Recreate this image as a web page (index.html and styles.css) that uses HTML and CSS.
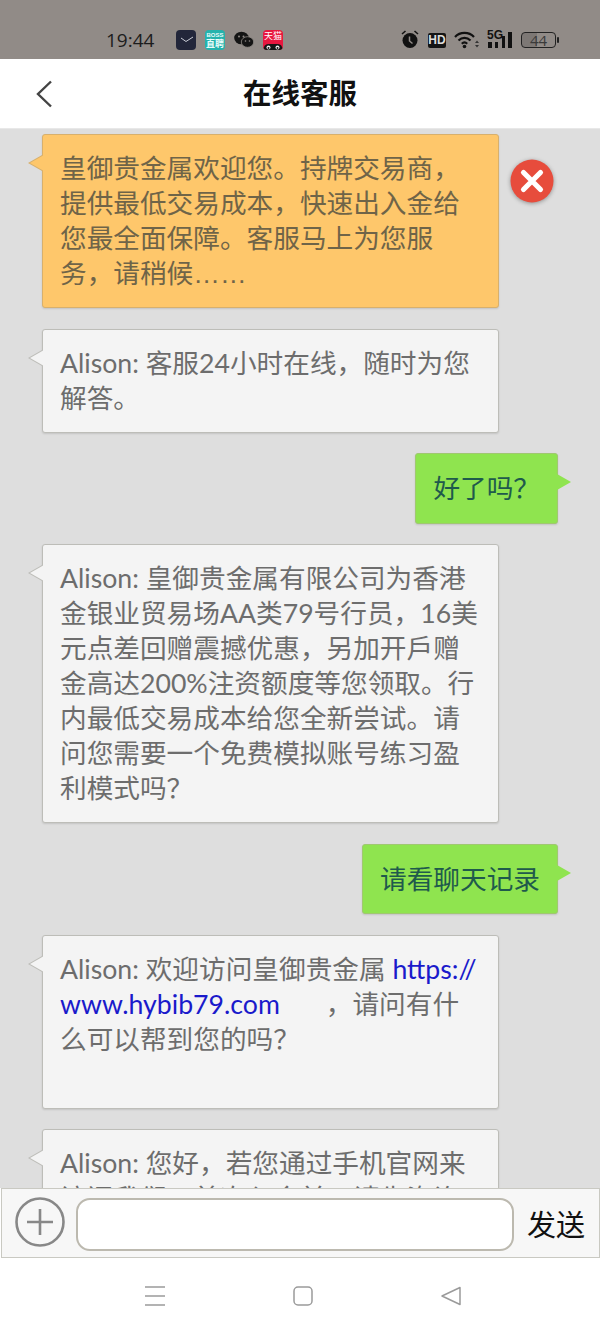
FILE: index.html
```html
<!DOCTYPE html>
<html lang="zh">
<head>
<meta charset="utf-8">
<title>在线客服</title>
<link rel="stylesheet" href="styles.css">
</head>
<body>
<div class="status">
  <span class="time">19:44</span>
  <div class="apps">
    <svg class="app" viewBox="0 0 20 20"><rect width="20" height="20" rx="4" fill="#22263a"/><path d="M5 8 10 11.500 17 7" fill="none" stroke="#c9ccd6" stroke-width="1"/></svg>
    <div class="app boss"><span class="boss-a">BOSS</span><span class="boss-b">直聘</span></div>
    <svg class="app" viewBox="0 0 20 20"><ellipse cx="7.500" cy="8" rx="7.300" ry="6.300" fill="#141414"/><ellipse cx="13.500" cy="12" rx="6.200" ry="5.300" fill="#141414" stroke="#918b87" stroke-width=".8"/><circle cx="5" cy="6.500" r="1" fill="#918b87"/><circle cx="9.500" cy="6.500" r="1" fill="#918b87"/><circle cx="11.500" cy="11" r=".8" fill="#918b87"/><circle cx="15.500" cy="11" r=".8" fill="#918b87"/></svg>
    <div class="app tmall"><span class="tmall-t">天猫</span><svg class="tmall-eyes" viewBox="0 0 20 8"><path d="M0 8Q1 2 5 2H15Q19 2 20 8Z" fill="#151515"/><circle cx="5.500" cy="5.500" r="2" fill="#eee"/><circle cx="14.500" cy="5.500" r="2" fill="#eee"/><circle cx="5.500" cy="6" r="1" fill="#151515"/><circle cx="14.500" cy="6" r="1" fill="#151515"/></svg></div>
  </div>
  <div class="sys">
    <svg class="alarm" viewBox="0 0 18 18"><circle cx="9" cy="10.500" r="7.500" fill="#111"/><path d="M1 4 4.500 1M17 4 13.500 1" stroke="#111" stroke-width="1.600"/><path d="M8.500 6.500v4.500l3 2.500" fill="none" stroke="#918b87" stroke-width="1.500"/></svg>
    <span class="hd">HD</span>
    <svg class="wifi" viewBox="0 0 25 20"><path d="M1 7C6 1.500 15 1.500 20 7M4.500 10.500C8 7 13 7 16.500 10.500M7.800 13.800C9.500 12.100 11.500 12.100 13.200 13.800" fill="none" stroke="#111" stroke-width="2.200"/><circle cx="10.500" cy="16.500" r="1.800" fill="#111"/><path d="M21 13 23 10.500 25 13ZM21 15 23 17.500 25 15Z" fill="#333"/></svg>
    <div class="signal">
      <span class="five">5G</span>
      <svg class="bars" viewBox="0 0 26 20"><path d="M1 12h4v6H1zM8 12h3v6H8zM15 6h3v12h-3zM21 2h4v16h-4z" fill="#111"/></svg>
    </div>
    <div class="battery"><span class="level">44</span></div>
  </div>
</div>
<header class="top">
  <svg class="back" viewBox="0 0 16 28"><path d="M15 1.500 2 14l13 12.500" fill="none" stroke="#444" stroke-width="2.400"/></svg>
  <h1 class="title">在线客服</h1>
</header>
<main class="chat">
  <div class="bubble notice">皇御贵金属欢迎您。持牌交易商，提供最低交易成本，快速出入金给您最全面保障。客服马上为您服务，请稍候<span class="dots">……</span></div>
  <div class="bubble agent">Alison: 客服24小时在线，随时为您解答。</div>
  <div class="bubble mine">好了吗？</div>
  <div class="bubble agent">Alison: 皇御贵金属有限公司为香港金银业贸易场AA类79号行员，16美元点差回赠震撼优惠，另加开戶赠金高达200%注资额度等您领取。行内最低交易成本给您全新尝试。请问您需要一个免费模拟账号练习盈利模式吗？</div>
  <div class="bubble mine">请看聊天记录</div>
  <div class="bubble agent">Alison: 欢迎访问皇御贵金属 <a class="link">https://<wbr>www.hybib79.com</a>，请问有什么可以帮到您的吗？<br><br></div>
  <div class="bubble agent">Alison: 您好，若您通过手机官网来访问我们，首次入金前，请先咨询客服</div>
  <svg class="close" viewBox="0 0 44 44"><circle cx="22" cy="22" r="21.500" fill="#e74c3c"/><path d="M13.500 13.500 30.500 30.500M30.500 13.500 13.500 30.500" stroke="#fff" stroke-width="5.200" stroke-linecap="round"/></svg>
</main>
<footer class="composer">
  <svg class="plus" viewBox="0 0 50 50"><circle cx="25" cy="25" r="23.500" fill="none" stroke="#888" stroke-width="2.600"/><path d="M25 12v26M12 25h26" stroke="#888" stroke-width="2.600"/></svg>
  <div class="input"></div>
  <span class="send">发送</span>
</footer>
<nav class="nav">
  <svg class="nav-icon" viewBox="0 0 20 20"><path d="M0 1h20M0 10h20M0 19h20" stroke="#9a9a9a" stroke-width="1.400"/></svg>
  <svg class="nav-icon" viewBox="0 0 20 20"><rect x="1" y="1" width="18" height="18" rx="4" fill="none" stroke="#9a9a9a" stroke-width="1.500"/></svg>
  <svg class="nav-icon" viewBox="0 0 20 20"><path d="M1 10 19 1.500V18.500Z" fill="none" stroke="#9a9a9a" stroke-width="1.500" stroke-linejoin="round"/></svg>
</nav>
</body>
</html>
```
FILE: styles.css
```css
* { box-sizing: border-box; }
html, body { margin: 0; height: 100%; }
body {
  width: 600px;
  height: 1333px;
  overflow: hidden;
  display: flex;
  flex-direction: column;
  background: #fff;
  font-family: Lato, "Noto Sans CJK SC", sans-serif;
}

/* status bar */
.status {
  flex: 0 0 59px;
  background: #918b87;
  display: flex;
  align-items: center;
  padding: 21px 44px 0 106px;
  color: #1a1a1a;
}
.time { font: 19px/20px "Open Sans", sans-serif; width: 70px; color: #1c1c1c; }
.apps { display: flex; gap: 9px; }
.app { display: block; width: 20px; height: 20px; }
.boss {
  background: #25b3ad;
  border-radius: 4px;
  color: #eafcfb;
  display: flex;
  flex-direction: column;
  align-items: center;
  justify-content: center;
  overflow: hidden;
}
.boss-a { font: 700 6px/7px "Liberation Sans", sans-serif; }
.boss-b { font: 700 9px/10px "Noto Sans CJK SC", sans-serif; }
.tmall {
  position: relative;
  background: #e8173f;
  border-radius: 4px;
  color: #fff;
  text-align: center;
  overflow: hidden;
}
.tmall-t { display: block; font: 9px/12px "Noto Sans CJK SC", sans-serif; }
.tmall-eyes { position: absolute; left: 0; bottom: 0; width: 20px; height: 8px; }
.sys { display: flex; align-items: center; margin-left: auto; }
.alarm { align-self: flex-start; width: 18px; height: 18px; }
.hd {
  margin-left: 9px;
  width: 18px;
  height: 15px;
  background: #151515;
  border-radius: 2px;
  color: #ddd;
  text-align: center;
  font: 700 12px/15px "Liberation Sans Narrow", "Liberation Sans", sans-serif;
}
.wifi { margin-left: 8px; width: 25px; height: 20px; }
.signal { position: relative; margin-left: 8px; width: 26px; height: 20px; }
.five { position: absolute; left: 0; top: 0; font: 700 12px/10px "Liberation Sans Narrow", "Liberation Sans", sans-serif; color: #111; }
.bars { display: block; width: 26px; height: 20px; }
.battery {
  position: relative;
  margin-left: 8px;
  width: 35px;
  height: 16px;
  border: 1.300px solid #222;
  border-radius: 4px;
  background: linear-gradient(90deg, #7d7875 44%, transparent 44%);
  text-align: center;
  font: 15px/14px "Open Sans", sans-serif;
  color: #3a3a3a;
}
.battery::after {
  content: "";
  position: absolute;
  right: -4px;
  top: 4px;
  width: 2px;
  height: 6px;
  background: #222;
  border-radius: 1px;
}

/* header */
.top {
  flex: 0 0 70px;
  background: #fff;
  display: flex;
  align-items: center;
  justify-content: center;
  position: relative;
  border-bottom: 1px solid #e8e8e8;
  padding-bottom: 3px;
}
.back { position: absolute; left: 36px; top: 21px; width: 16px; height: 28px; }
.title { margin: 0; font: 700 28.500px/40px "Noto Sans CJK SC", sans-serif; color: #111; }

/* chat */
.chat {
  flex: 1;
  min-height: 0;
  overflow: hidden;
  position: relative;
  background: #dedede;
  display: flex;
  flex-direction: column;
  align-items: flex-start;
  gap: 20.500px;
  padding: 5px 42px 0;
}
.bubble {
  position: relative;
  flex: none;
  border: 1px solid #bdbdb8;
  border-radius: 3px;
  padding: 16px 17px;
  font-size: 26.670px;
  line-height: 35px;
  box-shadow: 0 1px 2px rgba(0,0,0,.12);
}
.bubble::before, .bubble::after {
  content: "";
  position: absolute;
  top: 20px;
  width: 0;
  height: 0;
  border: 8px solid transparent;
}
.agent, .notice { width: 457px; }
.agent::before, .notice::before { left: -15px; border-left-width: 0; border-right-width: 14px; border-right-color: #bdbdb8; }
.agent::after, .notice::after { left: -13.500px; border-left-width: 0; border-right-width: 14px; }
.agent { background: #f4f4f4; color: #6d6d6d; }
.agent::after { border-right-color: #f4f4f4; }
.notice { background: #fec76b; border-color: #d8b06c; color: #6f6448; }
.notice::before { border-right-color: #d8b06c; }
.notice::after { border-right-color: #fec76b; }
.dots { font-family: "Liberation Sans", sans-serif; line-height: 0; }
.mine {
  align-self: flex-end;
  background: #8fe44f;
  border-color: #a0c870;
  color: #1f5a4c;
  padding-top: 17px;
  padding-bottom: 16.500px;
}
.mine::before { right: -14px; border-right-width: 0; border-left-width: 14px; border-left-color: #8fe44f; }
.mine::after { display: none; }
.link { color: #1a1acb; margin-right: 46px; }
.close {
  position: absolute;
  left: 510px;
  top: 30px;
  width: 44px;
  height: 44px;
  filter: drop-shadow(0 1px 2px rgba(0,0,0,.35));
}

/* composer */
.composer {
  flex: 0 0 70px;
  background: #f7f7f7;
  border: 1px solid #c9c9c2;
  margin-left: 1px;
  display: flex;
  align-items: center;
  padding: 0 13px 0 13px;
  position: relative;
}
.plus { flex: none; width: 50px; height: 50px; margin: 0 11px 2px 0; }
.input {
  flex: none;
  width: 438px;
  height: 53px;
  margin-top: 2px;
  background: #fff;
  border: 2px solid #bcb9af;
  border-radius: 14px;
}
.send { margin-left: 13px; font: 29px/40px "Noto Sans CJK SC", sans-serif; color: #111; white-space: nowrap; }

/* nav */
.nav {
  flex: 0 0 75px;
  background: #fff;
  display: flex;
  padding: 28px 0 0 145px;
  gap: 128px;
}
.nav-icon { width: 20px; height: 20px; }
```
